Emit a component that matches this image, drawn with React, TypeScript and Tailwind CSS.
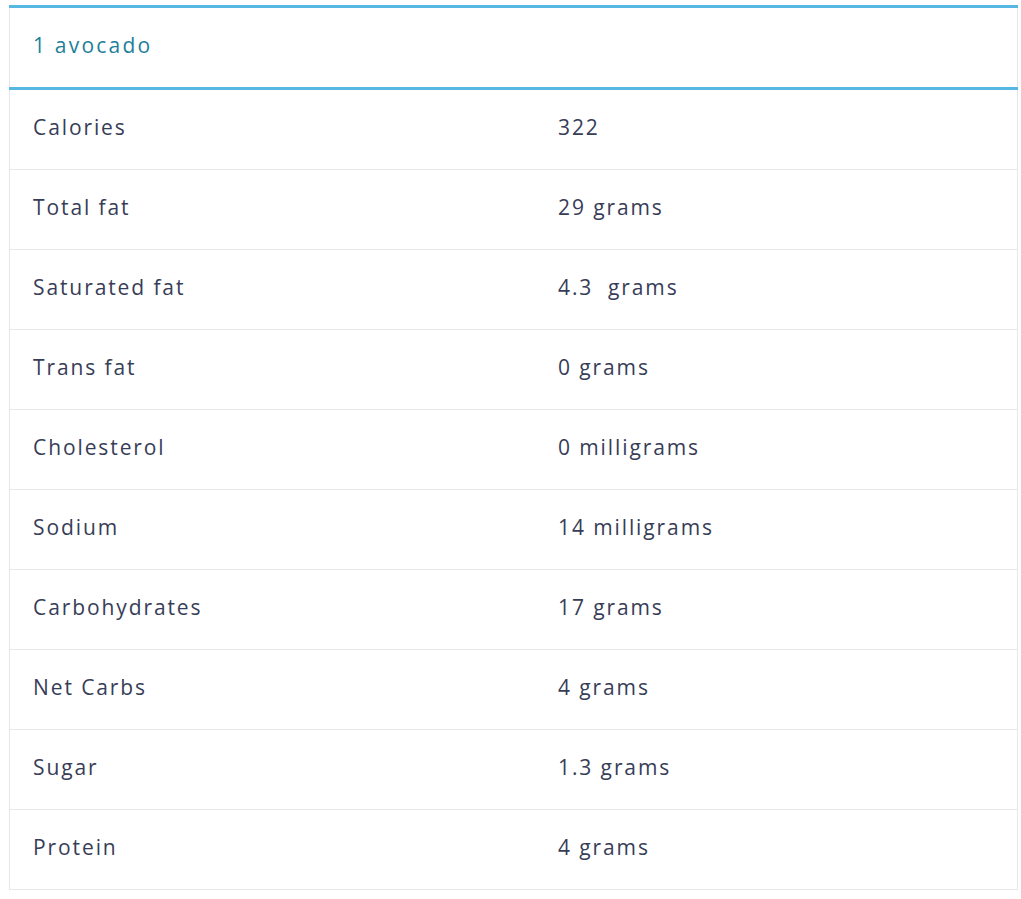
import React from "react";

const rows: [string, string][] = [
  ["Calories", "322"],
  ["Total fat", "29 grams"],
  ["Saturated fat", "4.3\u00a0 grams"],
  ["Trans fat", "0 grams"],
  ["Cholesterol", "0 milligrams"],
  ["Sodium", "14 milligrams"],
  ["Carbohydrates", "17 grams"],
  ["Net Carbs", "4 grams"],
  ["Sugar", "1.3 grams"],
  ["Protein", "4 grams"],
];

export default function App() {
  return (
    <div className="bg-white min-h-[899px] w-[1021px] pt-[5px] pl-[9px]" style={{ fontFamily: "'Open Sans', sans-serif" }}>
      <div className="w-[1009px] border-x border-[#e6e6e6]">
        <div className="h-[85px] border-y-[3px] border-[#55b7e2] -mx-px flex items-center pl-[24px] pb-[4px] text-[21px] text-[#1d7f9b] tracking-[2.2px]">
          1 avocado
        </div>
        {rows.map(([k, v]) => (
          <div key={k} className="h-[80px] border-b border-[#e8e8e8] flex items-center pb-[4px] text-[21px] text-[#373d57] tracking-[1.9px]">
            <div className="w-[548px] pl-[23px]">{k}</div>
            <div className="flex-1">{v}</div>
          </div>
        ))}
      </div>
    </div>
  );
}
